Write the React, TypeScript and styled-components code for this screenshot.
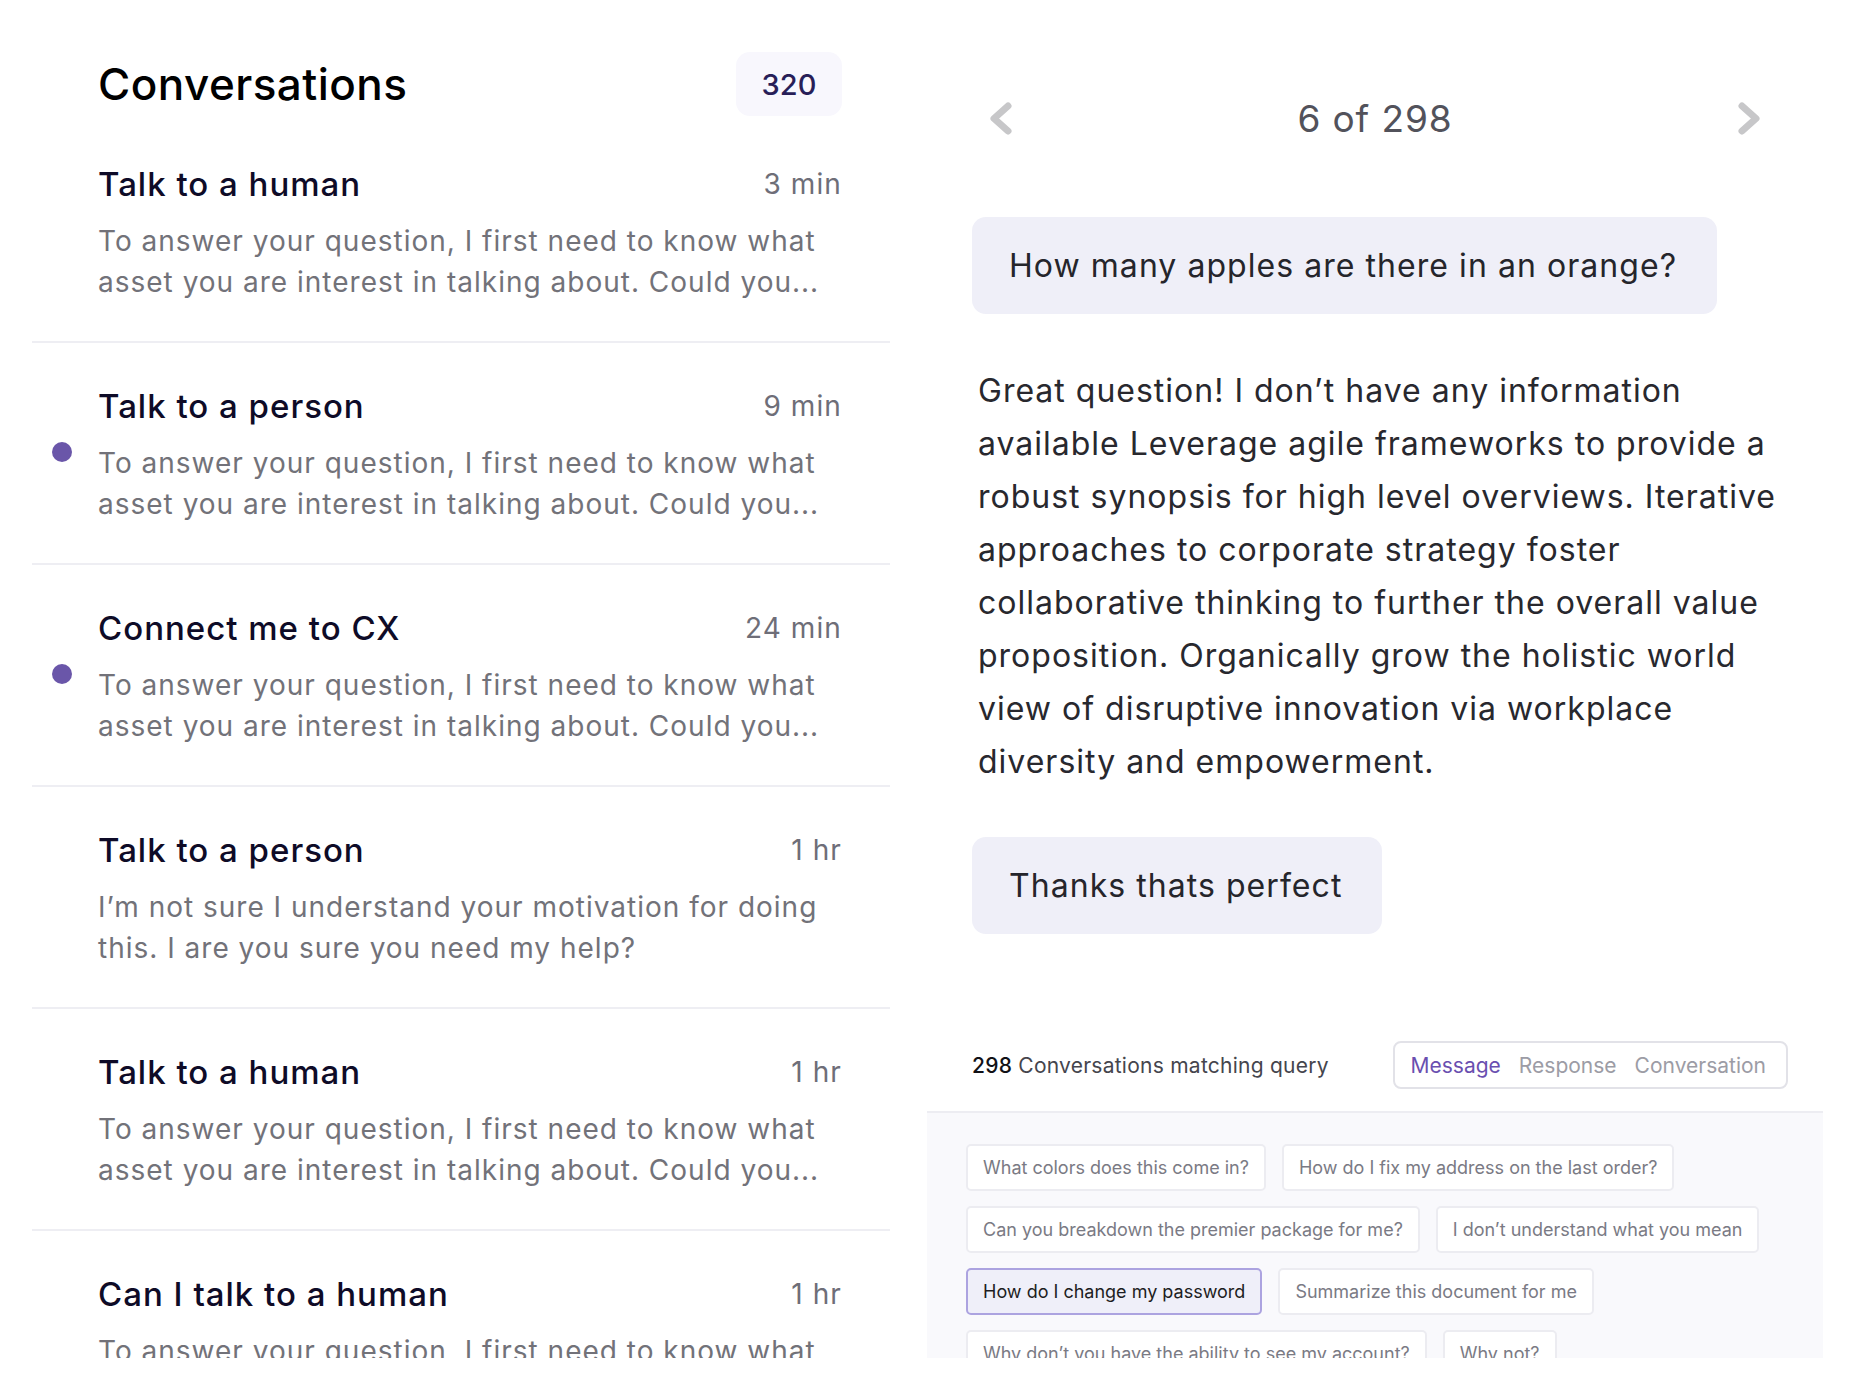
import * as React from "react";
import styled, { createGlobalStyle } from "styled-components";

const GlobalStyle = createGlobalStyle`
  html, body {
    margin: 0;
    padding: 0;
    background: #ffffff;
  }
  body {
    font-family: Inter, "Noto Sans", "Liberation Sans", sans-serif;
    -webkit-font-smoothing: antialiased;
  }
  * {
    box-sizing: border-box;
  }
`;

const Screen = styled.div`
  display: flex;
  gap: 37px;
  height: 1358px;
  overflow: hidden;
  padding: 0 33px 0 32px;
`;

const ListPanel = styled.section`
  width: 858px;
  flex-shrink: 0;
  display: flex;
  flex-direction: column;

  & > * {
    flex-shrink: 0;
  }
`;

const ListHeader = styled.header`
  display: flex;
  align-items: center;
  justify-content: space-between;
  padding: 52px 48px 5px 66px;
`;

const ListTitle = styled.h1`
  margin: 0;
  font-size: 44px;
  font-weight: 500;
  letter-spacing: 0.45px;
  color: #000000;
`;

const CountBadge = styled.span`
  display: flex;
  align-items: center;
  justify-content: center;
  width: 106px;
  height: 64px;
  border-radius: 14px;
  background: #f8f7fd;
  color: #281e58;
  font-size: 29px;
  font-weight: 500;
`;

const Item = styled.article`
  position: relative;
  padding: 41px 48px 38px 66px;
  border-bottom: 2px solid #eeeef3;
`;

const UnreadDot = styled.span`
  position: absolute;
  left: 20px;
  top: 99px;
  width: 20px;
  height: 20px;
  border-radius: 50%;
  background: #6a56a9;
`;

const ItemHead = styled.div`
  display: flex;
  align-items: center;
  justify-content: space-between;
  height: 44px;
`;

const ItemTitle = styled.h2`
  margin: 0;
  font-size: 33px;
  font-weight: 500;
  letter-spacing: 1px;
  color: #0e0b27;
`;

const ItemTime = styled.span`
  font-size: 28px;
  letter-spacing: 1.1px;
  color: #6e6e78;
`;

const ItemPreview = styled.p`
  margin: 15px 0 0;
  font-size: 28px;
  line-height: 41px;
  letter-spacing: 1px;
  color: #727279;
  max-width: 726px;
`;

const DetailPanel = styled.section`
  flex: 1;
  display: flex;
  flex-direction: column;
  min-width: 0;

  & > * {
    flex-shrink: 0;
  }
`;

const NavRow = styled.div`
  display: flex;
  align-items: center;
  justify-content: space-between;
  height: 70px;
  margin-top: 83px;
  padding: 0 63px;
`;

const NavButton = styled.button`
  display: flex;
  padding: 0;
  border: none;
  background: none;
  cursor: pointer;
`;

const NavCount = styled.span`
  font-size: 37px;
  letter-spacing: 0.9px;
  color: #52525b;
`;

const Bubble = styled.div<{ $top: number }>`
  align-self: flex-start;
  display: flex;
  align-items: center;
  height: 97px;
  margin: ${(p) => p.$top}px 0 0 45px;
  padding: 0 40px 0 37px;
  border-radius: 14px;
  background: #efeff8;
  font-size: 32px;
  letter-spacing: 1.05px;
  color: #25252b;
`;

const Answer = styled.p`
  margin: 50px 0 0 51px;
  width: 822px;
  font-size: 32px;
  line-height: 53px;
  letter-spacing: 1px;
  color: #28282e;
`;

const QueryRow = styled.div`
  display: flex;
  align-items: center;
  justify-content: space-between;
  margin-top: 107px;
  padding: 0 35px 22px 45px;
  border-bottom: 2px solid #ededf2;
`;

const QueryText = styled.span`
  font-size: 21px;
  letter-spacing: 0.25px;
  color: #45454d;

  b {
    font-weight: 500;
    color: #111116;
  }
`;

const Segmented = styled.div`
  display: flex;
  align-items: center;
  gap: 18px;
  height: 48px;
  padding: 0 20px 0 16px;
  border: 2px solid #e2e2e8;
  border-radius: 8px;
  background: #ffffff;
`;

const Segment = styled.span<{ $active?: boolean }>`
  font-size: 21px;
  color: ${(p) => (p.$active ? "#6a4fb0" : "#9c9ca5")};
`;

const ChipArea = styled.div`
  flex: 1 0 auto;
  display: flex;
  flex-wrap: wrap;
  align-content: flex-start;
  gap: 15px 16px;
  padding: 31px 39px;
  background: #f9f9fc;
`;

const Chip = styled.span<{ $selected?: boolean }>`
  display: flex;
  align-items: center;
  height: 47px;
  padding: 0 15px;
  border-radius: 5px;
  border: 2px solid ${(p) => (p.$selected ? "#aca3e0" : "#ececf1")};
  background: ${(p) => (p.$selected ? "#efeff9" : "#ffffff")};
  font-size: 18px;
  color: ${(p) => (p.$selected ? "#1d1d22" : "#7a7a84")};
`;

const Chevron = ({ dir }: { dir: "left" | "right" }) => (
  <svg width="22" height="33" viewBox="0 0 22 33" fill="none">
    <polyline
      points={dir === "left" ? "18,4 4,16.5 18,29" : "4,4 18,16.5 4,29"}
      stroke="#c7c7c9"
      strokeWidth="7"
      strokeLinecap="round"
      strokeLinejoin="round"
    />
  </svg>
);

const defaultPreview =
  "To answer your question, I first need to know what asset you are interest in talking about. Could you...";

const conversations = [
  { title: "Talk to a human", time: "3 min", unread: false, preview: defaultPreview },
  { title: "Talk to a person", time: "9 min", unread: true, preview: defaultPreview },
  { title: "Connect me to CX", time: "24 min", unread: true, preview: defaultPreview },
  {
    title: "Talk to a person",
    time: "1 hr",
    unread: false,
    preview: "I\u2019m not sure I understand your motivation for doing this. I are you sure you need my help?",
  },
  { title: "Talk to a human", time: "1 hr", unread: false, preview: defaultPreview },
  { title: "Can I talk to a human", time: "1 hr", unread: false, preview: defaultPreview },
];

const suggestions = [
  "What colors does this come in?",
  "How do I fix my address on the last order?",
  "Can you breakdown the premier package for me?",
  "I don\u2019t understand what you mean",
  "How do I change my password",
  "Summarize this document for me",
  "Why don\u2019t you have the ability to see my account?",
  "Why not?",
];

export default function App() {
  return (
    <>
      <GlobalStyle />
      <Screen>
        <ListPanel>
          <ListHeader>
            <ListTitle>Conversations</ListTitle>
            <CountBadge>320</CountBadge>
          </ListHeader>
          {conversations.map((c, i) => (
            <Item key={i}>
              {c.unread && <UnreadDot />}
              <ItemHead>
                <ItemTitle>{c.title}</ItemTitle>
                <ItemTime>{c.time}</ItemTime>
              </ItemHead>
              <ItemPreview>{c.preview}</ItemPreview>
            </Item>
          ))}
        </ListPanel>

        <DetailPanel>
          <NavRow>
            <NavButton aria-label="Previous">
              <Chevron dir="left" />
            </NavButton>
            <NavCount>6 of 298</NavCount>
            <NavButton aria-label="Next">
              <Chevron dir="right" />
            </NavButton>
          </NavRow>

          <Bubble $top={64}>How many apples are there in an orange?</Bubble>

          <Answer>
            Great question! I don’t have any information available Leverage agile frameworks to
            provide a robust synopsis for high level overviews. Iterative approaches to corporate
            strategy foster collaborative thinking to further the overall value proposition.
            Organically grow the holistic world view of disruptive innovation via workplace
            diversity and empowerment.
          </Answer>

          <Bubble $top={49}>Thanks thats perfect</Bubble>

          <QueryRow>
            <QueryText>
              <b>298</b> Conversations matching query
            </QueryText>
            <Segmented>
              <Segment $active>Message</Segment>
              <Segment>Response</Segment>
              <Segment>Conversation</Segment>
            </Segmented>
          </QueryRow>

          <ChipArea>
            {suggestions.map((s) => (
              <Chip key={s} $selected={s === "How do I change my password"}>
                {s}
              </Chip>
            ))}
          </ChipArea>
        </DetailPanel>
      </Screen>
    </>
  );
}
